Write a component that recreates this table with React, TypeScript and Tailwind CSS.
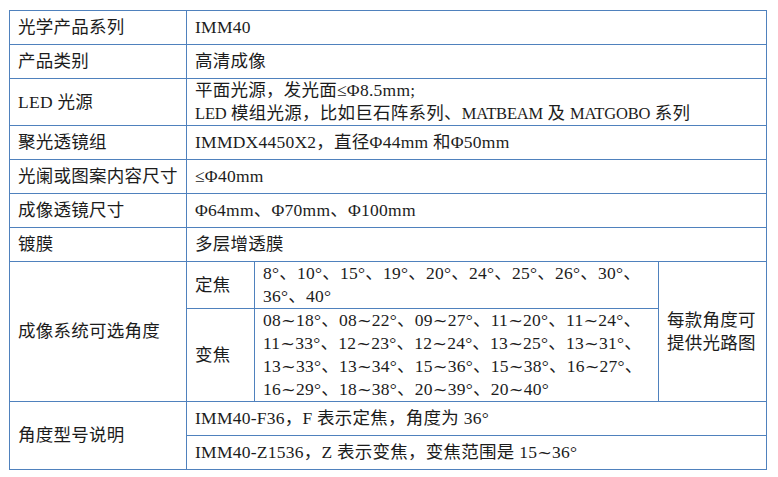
import React from 'react';

const cell = 'border border-[#4f81bd] px-2 align-middle';

// the reference's tilde is wider than Liberation Serif's, so borrow DejaVu's
function T({ text }: { text: string }) {
  const parts = text.split('~');
  return (
    <>
      {parts.map((p, i) => (
        <React.Fragment key={i}>
          {p}
          {i < parts.length - 1 && <span className="font-['DejaVu_Serif']">~</span>}
        </React.Fragment>
      ))}
    </>
  );
}

// capitals run narrower in the reference font
const Caps = ({ children }: { children: React.ReactNode }) => (
  <span className="text-[16.5px] tracking-[-0.2px]">{children}</span>
);

const zoomLines = [
  '08~18°、08~22°、09~27°、11~20°、11~24°、',
  '11~33°、12~23°、12~24°、13~25°、13~31°、',
  '13~33°、13~34°、15~36°、15~38°、16~27°、',
  '16~29°、18~38°、20~39°、20~40°',
];

const simpleRows: { label: string; value: React.ReactNode; h: string }[] = [
  { label: '光学产品系列', value: 'IMM40', h: 'h-[34px]' },
  { label: '产品类别', value: '高清成像', h: 'h-[34px]' },
  {
    label: 'LED 光源',
    value: (
      <>
        平面光源，发光面≤Φ8.5mm;
        <br />
        <Caps>LED</Caps> 模组光源，比如巨石阵系列、<Caps>MATBEAM</Caps> 及 <Caps>MATGOBO</Caps> 系列
      </>
    ),
    h: 'h-[47px]',
  },
  { label: '聚光透镜组', value: 'IMMDX4450X2，直径Φ44mm 和Φ50mm', h: 'h-[34px]' },
  { label: '光阑或图案内容尺寸', value: '≤Φ40mm', h: 'h-[34px]' },
  { label: '成像透镜尺寸', value: 'Φ64mm、Φ70mm、Φ100mm', h: 'h-[34px]' },
  { label: '镀膜', value: '多层增透膜', h: 'h-[34px]' },
];

export default function App() {
  return (
    <div className="w-[778px] h-[477px] bg-white pt-[10px] pl-[9px]">
      <table
        className="border-collapse table-fixed w-[757px] text-[17.5px] leading-[23px] tracking-[0.25px] text-[#1c1c1c]"
        style={{ fontFamily: '"Liberation Serif", "Noto Sans CJK SC", serif' }}
      >
        <colgroup>
          <col className="w-[177px]" />
          <col className="w-[68px]" />
          <col className="w-[404px]" />
          <col className="w-[108px]" />
        </colgroup>
        <tbody>
          {simpleRows.map((r) => (
            <tr key={r.label} className={r.h}>
              <td className={cell}>{r.label}</td>
              <td className={`${cell} whitespace-nowrap`} colSpan={3}>
                {r.value}
              </td>
            </tr>
          ))}
          <tr className="h-[46px]">
            <td className={cell} rowSpan={2}>
              成像系统可选角度
            </td>
            <td className={cell}>定焦</td>
            <td className={`${cell} whitespace-nowrap`}>
              8°、10°、15°、19°、20°、24°、25°、26°、30°、
              <br />
              36°、40°
            </td>
            <td className={`${cell} whitespace-nowrap`} rowSpan={2}>
              每款角度可
              <br />
              提供光路图
            </td>
          </tr>
          <tr className="h-[92px]">
            <td className={cell}>变焦</td>
            <td className={`${cell} whitespace-nowrap`}>
              {zoomLines.map((l, i) => (
                <React.Fragment key={i}>
                  <T text={l} />
                  {i < zoomLines.length - 1 && <br />}
                </React.Fragment>
              ))}
            </td>
          </tr>
          <tr className="h-[34px]">
            <td className={cell} rowSpan={2}>
              角度型号说明
            </td>
            <td className={cell} colSpan={3}>
              IMM40-F36，F 表示定焦，角度为 36°
            </td>
          </tr>
          <tr className="h-[34px]">
            <td className={cell} colSpan={3}>
              <T text="IMM40-Z1536，Z 表示变焦，变焦范围是 15~36°" />
            </td>
          </tr>
        </tbody>
      </table>
    </div>
  );
}
